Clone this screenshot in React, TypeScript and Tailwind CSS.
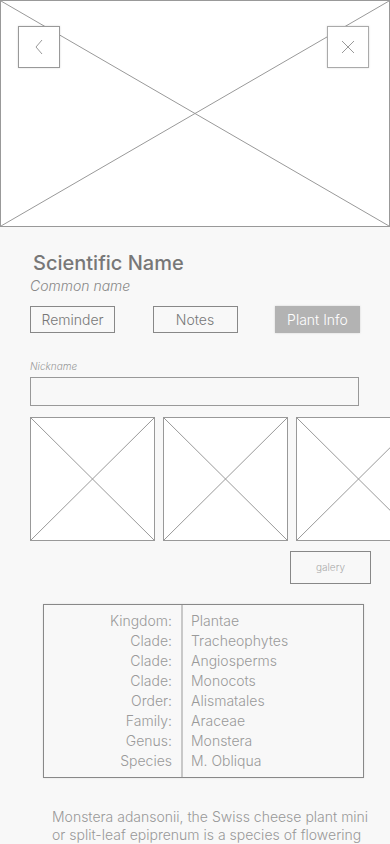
import React from "react";

const XBox = ({ className }: { className: string }) => (
  <div className={"relative shrink-0 border border-[#999] bg-white " + className}>
    <svg className="absolute inset-0 h-full w-full" preserveAspectRatio="none" viewBox="0 0 100 100">
      <line x1="0" y1="0" x2="100" y2="100" stroke="#999" strokeWidth="1" vectorEffect="non-scaling-stroke" />
      <line x1="100" y1="0" x2="0" y2="100" stroke="#999" strokeWidth="1" vectorEffect="non-scaling-stroke" />
    </svg>
  </div>
);

const rows: [string, string][] = [
  ["Kingdom:", "Plantae"],
  ["Clade:", "Tracheophytes"],
  ["Clade:", "Angiosperms"],
  ["Clade:", "Monocots"],
  ["Order:", "Alismatales"],
  ["Family:", "Araceae"],
  ["Genus:", "Monstera"],
  ["Species", "M. Obliqua"],
];

export default function App() {
  return (
    <div
      className="h-[844px] w-[390px] overflow-hidden bg-[#f8f8f8]"
      style={{ fontFamily: "Inter, 'Liberation Sans', sans-serif" }}
    >
      <div className="relative h-[227px] w-[390px] border border-[#999] bg-white">
        <svg className="absolute inset-0 h-full w-full" preserveAspectRatio="none" viewBox="0 0 100 100">
          <line x1="0" y1="0" x2="100" y2="100" stroke="#999" strokeWidth="1" vectorEffect="non-scaling-stroke" />
          <line x1="100" y1="0" x2="0" y2="100" stroke="#999" strokeWidth="1" vectorEffect="non-scaling-stroke" />
        </svg>
        <button className="absolute left-[17px] top-[25px] flex h-[42px] w-[42px] items-center justify-center border border-[#999] bg-white shadow-[0_0_2px_rgba(0,0,0,0.15)]">
          <svg width="10" height="16" viewBox="0 0 10 16">
            <path d="M8 1 L2 8 L8 15" fill="none" stroke="#999" strokeWidth="1" />
          </svg>
        </button>
        <button className="absolute left-[326px] top-[25px] flex h-[42px] w-[42px] items-center justify-center border border-[#aaa] bg-white shadow-[0_0_2px_rgba(0,0,0,0.15)]">
          <svg width="14" height="14" viewBox="0 0 14 14">
            <path d="M1 1 L13 13 M13 1 L1 13" fill="none" stroke="#999" strokeWidth="1" />
          </svg>
        </button>
      </div>

      <div className="flex flex-col px-[30px]">
        <h1 className="mt-[22px] ml-[3px] text-[20px] leading-[28px] font-medium text-[#777]">Scientific Name</h1>
        <p className="-mt-[1px] text-[14px] leading-[20px] font-light italic text-[#888]">Common name</p>

        <div className="mt-[10px] flex justify-between">
          <button className="h-[27px] w-[85px] border border-[#888] text-[14px] font-light text-[#777]">Reminder</button>
          <button className="h-[27px] w-[85px] border border-[#888] text-[14px] font-light text-[#777]">Notes</button>
          <button className="h-[27px] w-[85px] bg-[#b3b3b3] text-[14px] font-light text-white shadow-[0_0_2px_rgba(0,0,0,0.15)]">
            Plant Info
          </button>
        </div>

        <label className="mt-[26px] text-[10px] leading-[14px] font-light italic text-[#999]">Nickname</label>
        <div className="mt-[4px] h-[29px] w-[329px] border border-[#999]" />

        <div className="mt-[11px] flex gap-[8px]">
          <XBox className="h-[124px] w-[125px]" />
          <XBox className="h-[124px] w-[125px]" />
          <XBox className="h-[124px] w-[125px]" />
        </div>

        <button className="mt-[10px] ml-[260px] h-[33px] w-[81px] border border-[#888] text-[10px] font-light text-[#aaa]">
          galery
        </button>

        <div className="mt-[20px] ml-[13px] flex h-[174px] w-[321px] border border-[#888] shadow-[0_0_2px_rgba(0,0,0,0.1)]">
          <div className="flex w-[139px] flex-col items-end border-r-2 border-[#c8c8c8] pt-[6px] pr-[9px]">
            {rows.map(([k], i) => (
              <div key={i} className="text-[14px] leading-[20px] font-light text-[#9a9a9a]">
                {k}
              </div>
            ))}
          </div>
          <div className="flex flex-col pt-[6px] pl-[8px]">
            {rows.map(([, v], i) => (
              <div key={i} className="text-[14px] leading-[20px] font-light text-[#9a9a9a]">
                {v}
              </div>
            ))}
          </div>
        </div>

        <p className="mt-[30px] ml-[22px] w-[322px] text-[14px] leading-[18px] font-light text-[#999]">
          Monstera adansonii, the Swiss cheese plant mini or split-leaf epiprenum is a species of flowering plant in the
          family Araceae, native to Central and South America.
        </p>
      </div>
    </div>
  );
}
